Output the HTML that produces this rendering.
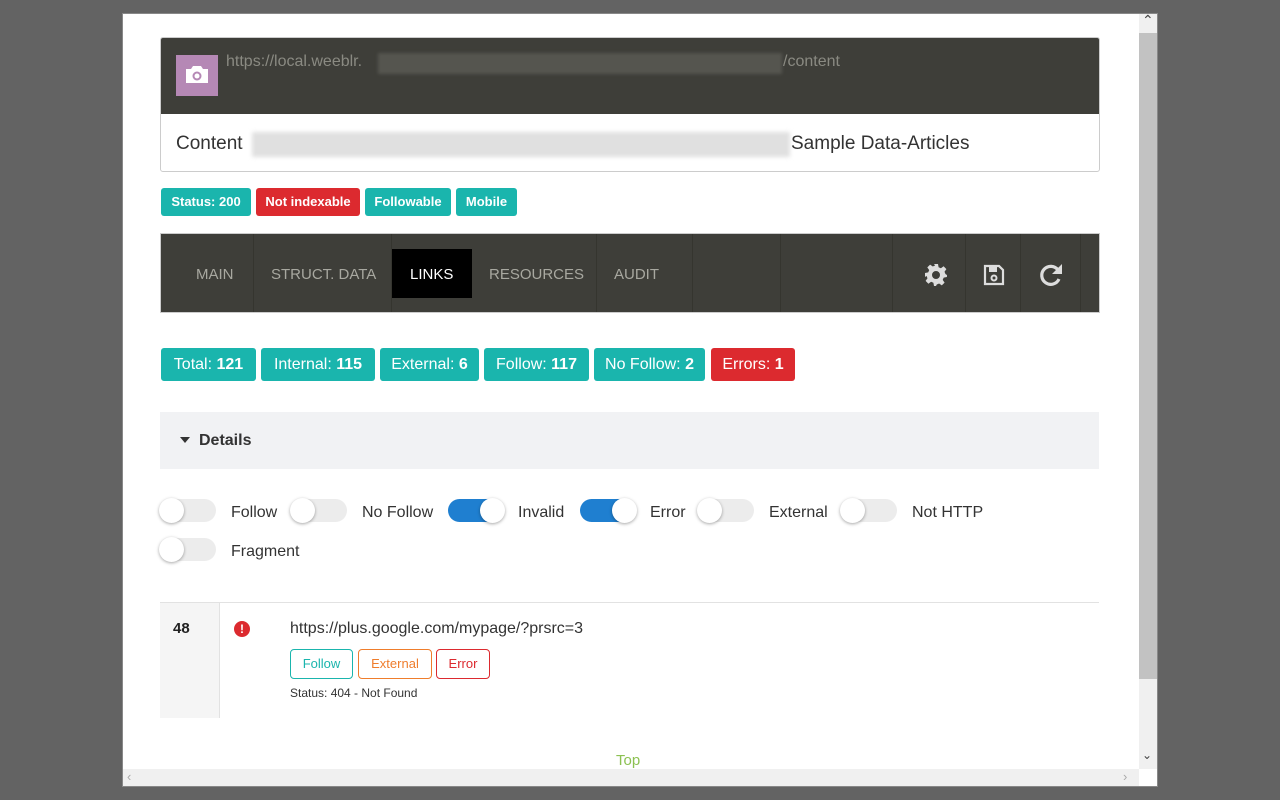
<!DOCTYPE html>
<html><head><meta charset="utf-8"><style>
*{box-sizing:border-box;margin:0;padding:0}
body{width:1280px;height:800px;background:#636363;font-family:"Liberation Sans",sans-serif;position:relative;overflow:hidden}
.a{position:absolute}
.win{left:122px;top:13px;width:1036px;height:774px;background:#fff;border:1px solid #888}
.badge{position:absolute;color:#fff;font-size:13px;font-weight:bold;border-radius:3px;text-align:center;line-height:27px;top:188px;height:28px}
.cnt{position:absolute;top:348px;height:33px;line-height:33px;color:#fff;font-size:16px;border-radius:3px;text-align:center;background:#1ab5ad}
.tab{position:absolute;top:266px;color:#a8a8a0;font-size:15px}
.sep{position:absolute;top:234px;width:1px;height:78px;background:#35352f}
.tg{position:absolute;width:56px;height:23px;border-radius:12px;background:#ececec}
.tg i{position:absolute;top:-1px;left:-1px;width:25px;height:25px;border-radius:50%;background:#fff;box-shadow:0 1px 3px rgba(0,0,0,.35)}
.tg.on{background:#1f7fd0}
.tg.on i{left:32px}
.lb{position:absolute;font-size:16px;color:#333}
.ob{position:absolute;top:649px;height:30px;line-height:28px;border:1.5px solid;border-radius:4px;font-size:13px;text-align:center}
</style></head><body>
<div class="a win"></div>
<!-- scrollbars -->
<div class="a" style="left:1139px;top:14px;width:18px;height:755px;background:#f0f0f0"></div>
<div class="a" style="left:1139px;top:33px;width:18px;height:646px;background:#c2c2c2"></div>
<div class="a" style="left:1142px;top:12px;font-size:14px;color:#444">&#8963;</div>
<div class="a" style="left:1142px;top:748px;font-size:12px;color:#444">&#8964;</div>
<div class="a" style="left:123px;top:769px;width:1016px;height:17px;background:#f0f0f0"></div>
<div class="a" style="left:127px;top:769px;font-size:13px;color:#aaa">&#8249;</div>
<div class="a" style="left:1123px;top:769px;font-size:13px;color:#aaa">&#8250;</div>

<!-- header card -->
<div class="a" style="left:160px;top:37px;width:940px;height:135px;border:1px solid #ccc;border-radius:3px;overflow:hidden">
 <div class="a" style="left:0;top:0;width:940px;height:76px;background:#3e3e39"></div>
</div>
<div class="a" style="left:176px;top:55px;width:42px;height:41px;background:#b588b5"></div>
<svg class="a" style="left:183px;top:63px" width="28" height="24" viewBox="0 0 28 24"><path d="M3 6h5l2-3h8l2 3h5v14H3z" fill="#fff"/><circle cx="14" cy="13" r="4.5" fill="#b588b5"/><circle cx="14" cy="13" r="2.5" fill="#fff"/></svg>
<div class="a" style="left:226px;top:53px;font-size:16px;color:#8a8a82">https://local.weeblr.</div>
<div class="a" style="left:378px;top:53px;width:404px;height:21px;background:#55554f;filter:blur(1.5px)"></div>
<div class="a" style="left:783px;top:53px;font-size:16px;color:#8a8a82">/content</div>
<div class="a" style="left:176px;top:133px;font-size:19px;color:#333">Content</div>
<div class="a" style="left:252px;top:132px;width:538px;height:25px;background:#e0e0e0;filter:blur(2px)"></div>
<div class="a" style="left:791px;top:133px;font-size:19px;color:#333">Sample Data-Articles</div>

<div class="badge" style="left:161px;width:90px;background:#1ab5ad">Status: 200</div>
<div class="badge" style="left:256px;width:104px;background:#dc2a2f">Not indexable</div>
<div class="badge" style="left:365px;width:86px;background:#1ab5ad">Followable</div>
<div class="badge" style="left:456px;width:61px;background:#1ab5ad">Mobile</div>

<!-- nav -->
<div class="a" style="left:160px;top:233px;width:940px;height:80px;background:#3e3e39;border:1px solid #ccc"></div>
<div class="sep" style="left:253px"></div><div class="sep" style="left:391px"></div><div class="sep" style="left:596px"></div><div class="sep" style="left:692px"></div><div class="sep" style="left:780px"></div><div class="sep" style="left:892px"></div><div class="sep" style="left:965px"></div><div class="sep" style="left:1020px"></div><div class="sep" style="left:1080px"></div>
<div class="a" style="left:392px;top:249px;width:80px;height:49px;background:#000"></div>
<div class="tab" style="left:196px">MAIN</div>
<div class="tab" style="left:271px">STRUCT. DATA</div>
<div class="tab" style="left:410px;color:#fff">LINKS</div>
<div class="tab" style="left:489px">RESOURCES</div>
<div class="tab" style="left:614px">AUDIT</div>
<svg class="a" style="left:924px;top:263px" width="24" height="24" viewBox="0 0 24 24"><path fill="#ddd" d="M10 1h4l.6 3.2 2.3 1 2.7-1.9 2.8 2.8-1.9 2.7 1 2.3L23 12v0l-.1 2-3.2.6-1 2.3 1.9 2.7-2.8 2.8-2.7-1.9-2.3 1L12 23h-2l-.6-3.2-2.3-1-2.7 1.9-2.8-2.8 1.9-2.7-1-2.3L1 14v-4l3.2-.6 1-2.3-1.9-2.7 2.8-2.8 2.7 1.9 2.3-1zM12 8a4 4 0 100 8 4 4 0 000-8z"/></svg>
<svg class="a" style="left:983px;top:264px" width="22" height="22" viewBox="0 0 22 22"><path fill="none" stroke="#ddd" stroke-width="2.2" d="M2 2h14l4 4v14H2z"/><rect x="6" y="3" width="8" height="5" fill="#ddd"/><circle cx="11" cy="14" r="2.5" fill="none" stroke="#ddd" stroke-width="2"/></svg>
<svg class="a" style="left:1038px;top:262px" width="26" height="26" viewBox="0 0 26 26"><path fill="none" stroke="#ddd" stroke-width="3.2" d="M20 8A9 9 0 1 0 21 17"/><path fill="#ddd" d="M24 2v10h-10z"/></svg>

<!-- counters -->
<div class="cnt" style="left:161px;width:95px">Total: <b>121</b></div>
<div class="cnt" style="left:261px;width:114px">Internal: <b>115</b></div>
<div class="cnt" style="left:380px;width:99px">External: <b>6</b></div>
<div class="cnt" style="left:484px;width:105px">Follow: <b>117</b></div>
<div class="cnt" style="left:594px;width:111px">No Follow: <b>2</b></div>
<div class="cnt" style="left:711px;width:84px;background:#dc2a2f">Errors: <b>1</b></div>

<div class="a" style="left:160px;top:412px;width:939px;height:57px;background:#f1f2f4"></div>
<div class="a" style="left:180px;top:437px;width:0;height:0;border-left:5px solid transparent;border-right:5px solid transparent;border-top:6px solid #333"></div>
<div class="a" style="left:199px;top:432px;font-size:16px;font-weight:bold;color:#333">Details</div>

<div class="tg" style="left:160px;top:499px"><i></i></div><div class="lb" style="left:231px;top:504px">Follow</div>
<div class="tg" style="left:291px;top:499px"><i></i></div><div class="lb" style="left:362px;top:504px">No Follow</div>
<div class="tg on" style="left:448px;top:499px"><i></i></div><div class="lb" style="left:518px;top:504px">Invalid</div>
<div class="tg on" style="left:580px;top:499px"><i></i></div><div class="lb" style="left:650px;top:504px">Error</div>
<div class="tg" style="left:698px;top:499px"><i></i></div><div class="lb" style="left:769px;top:504px">External</div>
<div class="tg" style="left:841px;top:499px"><i></i></div><div class="lb" style="left:912px;top:504px">Not HTTP</div>
<div class="tg" style="left:160px;top:538px"><i></i></div><div class="lb" style="left:231px;top:543px">Fragment</div>

<!-- row -->
<div class="a" style="left:160px;top:602px;width:939px;height:1px;background:#e2e2e2"></div>
<div class="a" style="left:160px;top:603px;width:60px;height:115px;background:#f5f5f5;border-right:1px solid #e2e2e2"></div>
<div class="a" style="left:173px;top:620px;font-size:15px;font-weight:bold;color:#222">48</div>
<div class="a" style="left:234px;top:621px;width:16px;height:16px;border-radius:50%;background:#dc2a2f;color:#fff;font-size:12px;font-weight:bold;text-align:center;line-height:16px">!</div>
<div class="a" style="left:290px;top:620px;font-size:16px;color:#333">https://plus.google.com/mypage/?prsrc=3</div>
<div class="ob" style="left:290px;width:63px;color:#1ab5ad;border-color:#1ab5ad">Follow</div>
<div class="ob" style="left:358px;width:74px;color:#ef7d2c;border-color:#ef7d2c">External</div>
<div class="ob" style="left:436px;width:54px;color:#dc2a2f;border-color:#dc2a2f">Error</div>
<div class="a" style="left:290px;top:686px;font-size:12px;color:#333">Status: 404 - Not Found</div>
<div class="a" style="left:616px;top:752px;font-size:15px;color:#8cc152">Top</div>
</body></html>
